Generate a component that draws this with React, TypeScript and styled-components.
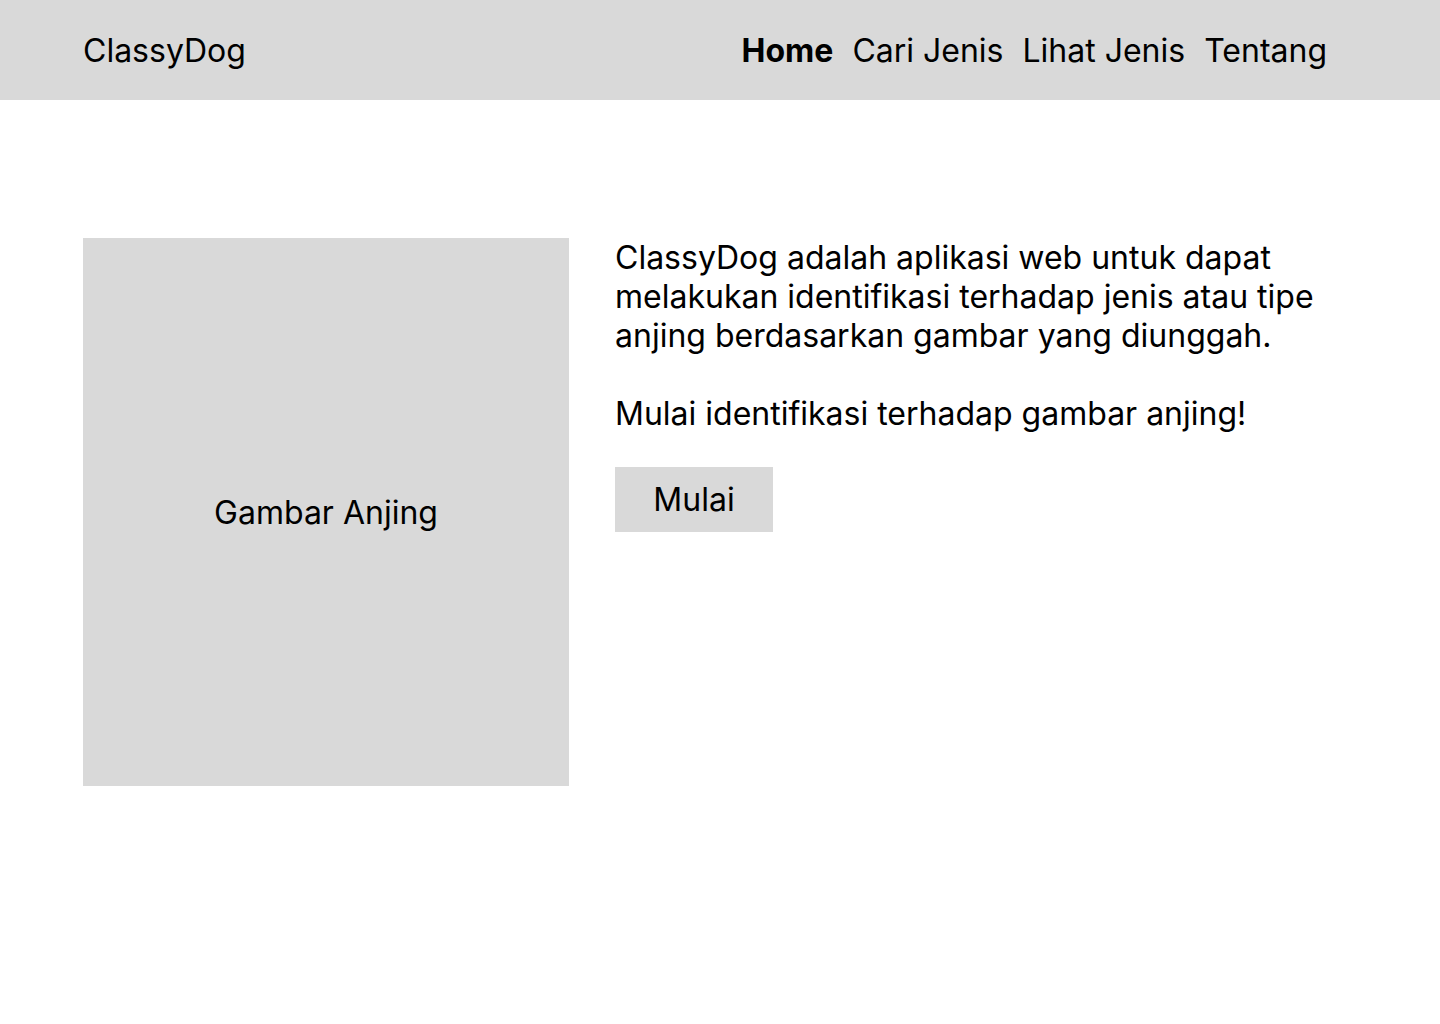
import React from "react";
import styled, { createGlobalStyle } from "styled-components";

const GRAY = "#D9D9D9";

const GlobalStyle = createGlobalStyle`
  body {
    margin: 0;
    background: #ffffff;
    color: #000000;
    font-family: Inter, "Noto Sans", "Liberation Sans", sans-serif;
  }
`;

const navItems = [
  { label: "Home", active: true },
  { label: "Cari Jenis", active: false },
  { label: "Lihat Jenis", active: false },
  { label: "Tentang", active: false },
];

const App = () => {
  return (
    <>
      <GlobalStyle />
      <Header>
        <Logo>ClassyDog</Logo>
        <Nav>
          {navItems.map((item) => (
            <NavLink key={item.label} active={item.active}>
              {item.label}
            </NavLink>
          ))}
        </Nav>
      </Header>
      <Main>
        <ImageBox>Gambar Anjing</ImageBox>
        <Content>
          <Paragraph>
            ClassyDog adalah aplikasi web untuk dapat melakukan identifikasi terhadap jenis atau tipe anjing
            berdasarkan gambar yang diunggah.
          </Paragraph>
          <Paragraph>Mulai identifikasi terhadap gambar anjing!</Paragraph>
          <StartButton type="button">Mulai</StartButton>
        </Content>
      </Main>
    </>
  );
};

const Header = styled.header`
  height: 100px;
  background-color: ${GRAY};
  display: flex;
  align-items: center;
  justify-content: space-between;
  padding: 0 113px 0 83px;
`;

const Logo = styled.div`
  font-size: 32px;
  font-weight: 400;
`;

const Nav = styled.nav`
  display: flex;
  gap: 19px;
`;

const NavLink = styled.a<{ active: boolean }>`
  font-size: 32px;
  font-weight: ${(props) => (props.active ? 700 : 400)};
  color: #000;
  cursor: pointer;
`;

const Main = styled.main`
  display: flex;
  gap: 46px;
  padding: 138px 113px 0 83px;
`;

const ImageBox = styled.div`
  flex: 0 0 486px;
  height: 548px;
  background-color: ${GRAY};
  display: flex;
  align-items: center;
  justify-content: center;
  font-size: 32px;
`;

const Content = styled.div`
  flex: 1;
  display: flex;
  flex-direction: column;
  align-items: flex-start;
`;

const Paragraph = styled.p`
  margin: 0 0 39px;
  font-size: 32px;
  line-height: 39px;

  &:last-of-type {
    margin-bottom: 34px;
  }
`;

const StartButton = styled.button`
  width: 158px;
  height: 65px;
  border: none;
  background-color: ${GRAY};
  font-family: inherit;
  font-size: 32px;
  color: #000;
  cursor: pointer;
`;

export default App;
